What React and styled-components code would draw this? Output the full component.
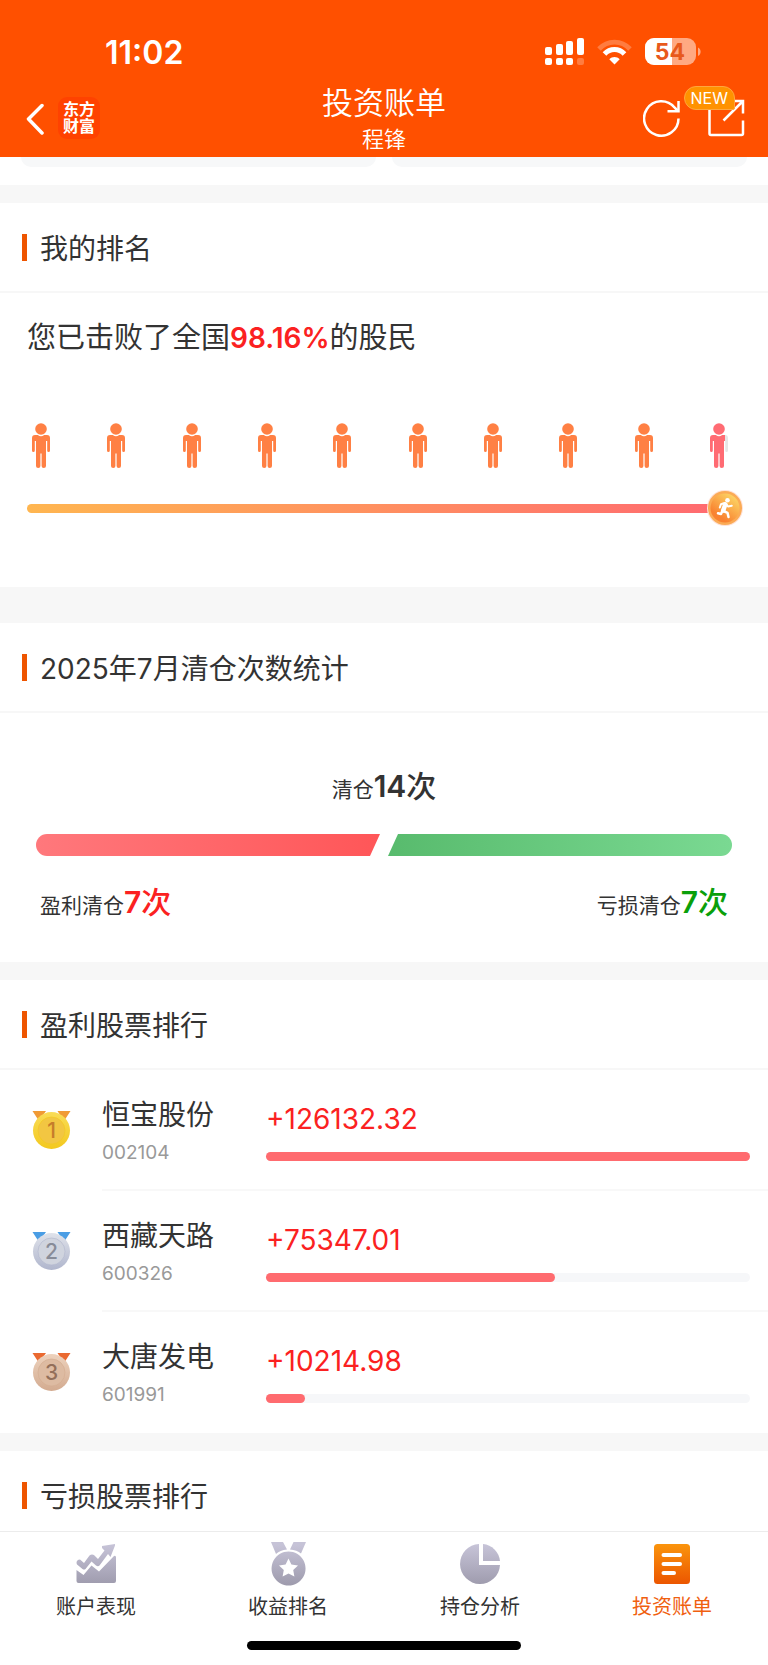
import React from 'react';
import styled, { createGlobalStyle } from 'styled-components';

const GlobalStyle = createGlobalStyle`
  * {
    box-sizing: border-box;
  }
  body {
    margin: 0;
    background: #fff;
    color: #333;
    font-family: Inter, 'Noto Sans CJK SC', sans-serif;
    font-size: 28px;
    font-weight: 400;
  }
  h1, h2, p, ul, ol {
    margin: 0;
    padding: 0;
    font-weight: inherit;
  }
  ul, ol {
    list-style: none;
  }
  button {
    display: flex;
    padding: 0;
    border: 0;
    background: none;
    color: inherit;
    font: inherit;
  }
  svg {
    display: block;
    flex: none;
  }
`;

const Screen = styled.div`
  display: flex;
  flex-direction: column;
  height: 100vh;
  overflow: hidden;
`;

const Header = styled.header`
  flex: none;
  background: #ff5000;
  color: #fff;
`;

const StatusBar = styled.div`
  display: flex;
  align-items: center;
  justify-content: space-between;
  height: 78px;
  padding: 26px 67px 0 105px;
`;

const Clock = styled.time`
  font-size: 32px;
  font-weight: 600;
`;

const StatusIcons = styled.div`
  display: flex;
  align-items: center;
  gap: 13px;
`;

const NavBar = styled.div`
  display: grid;
  grid-template-columns: 1fr auto 1fr;
  align-items: center;
  height: 79px;
  padding: 0 23px;
`;

const NavLeft = styled.div`
  display: flex;
  align-items: center;
  gap: 13px;
`;

const Logo = styled.div`
  width: 42px;
  height: 42px;
  padding: 4px 0;
  border-radius: 9px;
  background: #ff4200;
  font-size: 16px;
  font-weight: 700;
  line-height: 17px;
  text-align: center;
`;

const NavTitle = styled.div`
  display: flex;
  flex-direction: column;
  padding-top: 2px;
  text-align: center;
  font-weight: 350;
  h1 {
    font-size: 31px;
    line-height: 40px;
  }
  p {
    font-size: 22px;
    line-height: 32px;
  }
`;

const NavRight = styled.div`
  display: flex;
  align-items: center;
  justify-content: flex-end;
  gap: 27px;
`;

const ShareButton = styled.button`
  position: relative;
`;

const NewBadge = styled.span`
  position: absolute;
  top: -13px;
  right: 10px;
  padding: 0 6px;
  border: 1px solid #ffa63d;
  border-radius: 12px 12px 2px 12px;
  background: #ff9200;
  font-size: 16px;
  font-weight: 400;
  line-height: 22px;
`;

const Content = styled.main`
  flex: 1;
  min-height: 0;
  overflow: hidden;
  background: #f7f7f7;
`;

const CardStrip = styled.div`
  display: grid;
  grid-template-columns: 1fr 1fr;
  gap: 16px;
  padding: 0 21px 18px;
  background: #fff;
`;

const CardEnd = styled.div`
  height: 10px;
  border-radius: 0 0 14px 14px;
  background: #f7f8f9;
`;

const Section = styled.section`
  margin-top: ${({ $gap }) => $gap || 18}px;
  background: #fff;
`;

const SectionTitle = styled.h2`
  display: flex;
  align-items: center;
  gap: 13px;
  height: 90px;
  padding: 0 22px;
  border-bottom: 2px solid #f7f7f7;
  font-size: 28px;
  &::before {
    content: '';
    width: 5px;
    height: 27px;
    background: #ee5500;
  }
`;

const RankBody = styled.div`
  padding: 25px 25px 61px 27px;
`;

const RankText = styled.p`
  font-size: 29px;
  line-height: 40px;
  strong {
    color: #fb2121;
    font-size: 28px;
    font-weight: 600;
  }
`;

const People = styled.ul`
  display: flex;
  justify-content: space-between;
  padding: 65px 14px 0 4px;
`;

const Track = styled.div`
  display: flex;
  align-items: center;
  margin-top: 21px;
`;

const TrackLine = styled.div`
  flex: 1;
  height: 9px;
  margin-right: -8px;
  border-radius: 5px;
  background: linear-gradient(90deg, #ffb650, #ff6a70);
`;

const Runner = styled.div`
  position: relative;
`;

const CountBody = styled.div`
  padding: 51px 36px 34px;
`;

const Count = styled.p`
  font-size: 21px;
  line-height: 44px;
  text-align: center;
  strong {
    color: ${({ $color }) => $color || '#333'};
    font-size: 30px;
    font-weight: 600;
  }
`;

const Unit = styled.span`
  font-weight: 500;
`;

const CountBar = styled.div`
  display: flex;
  gap: 8px;
  height: 22px;
  margin: 22px 0 24px;
`;

const Profit = styled.div`
  flex: ${({ $share }) => $share};
  border-radius: 11px 0 0 11px;
  background: linear-gradient(90deg, #ff787c, #ff5658);
  clip-path: polygon(0 0, 100% 0, calc(100% - 10px) 100%, 0 100%);
`;

const Loss = styled.div`
  flex: ${({ $share }) => $share};
  border-radius: 0 11px 11px 0;
  background: linear-gradient(90deg, #58bb6d, #7ad992);
  clip-path: polygon(10px 0, 100% 0, 100% 100%, 0 100%);
`;

const CountLegend = styled.div`
  display: flex;
  justify-content: space-between;
  padding: 0 4px;
`;

const StockRow = styled.li`
  display: flex;
  padding-left: 32px;
`;

const MedalCell = styled.div`
  width: 70px;
  padding-top: 40px;
`;

const StockInfo = styled.div`
  display: flex;
  flex: 1;
  height: 121px;
  padding-right: 18px;
  border-bottom: ${({ $last }) => ($last ? 0 : 2)}px solid #f8f8f8;
`;

const StockName = styled.div`
  width: 164px;
  padding-top: 25px;
  font-size: 28px;
  line-height: 40px;
  small {
    display: block;
    color: #999;
    font-size: 19px;
    line-height: 36px;
  }
`;

const StockAmount = styled.div`
  flex: 1;
  padding-top: 29px;
  color: #fb2121;
  font-size: 28px;
  line-height: 40px;
`;

const Meter = styled.div`
  height: 9px;
  margin-top: 13px;
  border-radius: 5px;
  background: #f6f7f9;
`;

const MeterFill = styled.div`
  height: 100%;
  border-radius: 5px;
  background: #ff6b6f;
`;

const TabBar = styled.nav`
  flex: none;
  padding-bottom: 15px;
  border-top: 1px solid #ececec;
  background: #fff;
`;

const Tabs = styled.div`
  display: flex;
`;

const Tab = styled.button`
  && {
    display: flex;
    flex: 1;
    flex-direction: column;
    align-items: center;
    gap: 4px;
    padding-top: 9px;
    color: ${({ $active }) => ($active ? '#f0600f' : '#333')};
    font-size: 20px;
    line-height: 28px;
  }
`;

const HomeIndicator = styled.div`
  width: 274px;
  height: 9px;
  margin: 20px auto 0;
  border-radius: 5px;
  background: #000;
`;

const SignalIcon = () => (
  <svg width="39" height="28" fill="#fff">
    <rect x="0" y="9" width="7" height="8" rx="2" />
    <rect x="11" y="6" width="7" height="11" rx="2" />
    <rect x="21" y="3" width="7" height="14" rx="2" />
    <rect x="32" y="0" width="7" height="17" rx="2" />
    <rect x="0" y="20" width="7" height="7" rx="2" />
    <rect x="11" y="20" width="7" height="7" rx="2" />
    <rect x="21" y="20" width="7" height="7" rx="2" />
    <rect x="32" y="20" width="7" height="7" rx="2" opacity="0.25" />
  </svg>
);

const WifiIcon = () => (
  <svg width="35" height="26" viewBox="0 0 35 26" fill="none" stroke="#fff">
    <path d="M2 10C10.500 .8 24.500 .8 33 10" strokeWidth="4.800" opacity="0.25" />
    <path d="M7.500 15C13 9 22 9 27.500 15" strokeWidth="5" />
    <path d="M17.500 25.500L12.300 20.200C15.200 17.200 19.800 17.200 22.700 20.200Z" fill="#fff" stroke="none" />
  </svg>
);

const BatteryIcon = () => (
  <svg width="56" height="28" viewBox="0 0 56 28">
    <defs>
      <clipPath id="charge">
        <rect width="27" height="28" />
      </clipPath>
    </defs>
    <rect width="51" height="27" rx="9" fill="#ffa982" />
    <rect width="51" height="27" rx="9" fill="#fff" clipPath="url(#charge)" />
    <path d="M53 9.500c3.500 1.500 3.500 7 0 8.500z" fill="#ffa982" />
    <text x="25" y="22" textAnchor="middle" fontSize="23" fontWeight="700" fill="#e8591c">54</text>
  </svg>
);

const BackIcon = () => (
  <svg width="22" height="34" fill="none" stroke="#fff" strokeWidth="3.500" strokeLinecap="round" strokeLinejoin="round">
    <path d="M19 4.500L5.500 18L19 32" />
  </svg>
);

const RefreshIcon = () => (
  <svg width="38" height="40" fill="none" stroke="#fff" strokeWidth="2.500">
    <path d="M35.500 20.500A17.200 17.200 0 1 1 31.500 9.500L35 13" />
    <path d="M35.500 3V13.200H24.500" />
  </svg>
);

const ShareIcon = () => (
  <svg width="37" height="38" fill="none" stroke="#fff" strokeWidth="2.500">
    <path d="M1.500 8V34.500Q1.500 36 3 36H33.500Q35 36 35 34.500V21.500" />
    <path d="M24 2H35V14.500M35 2L15.500 21.500" />
  </svg>
);

const PERSON_PATH = 'M4 12h2.800q3.200 2.400 6.400 0h2.800q3 0 3 3v12.500q0 1.500-1.400 1.500t-1.400-1.500V18H15v25q0 2-2.200 2t-2.200-2V30.500H9.400V43q0 2-2.200 2T5 43V18H3.800v9.500Q3.800 29 2.400 29T1 27.500V15q0-3 3-3z';

const Person = ({ index, fill }) => (
  <svg width="20" height="46">
    <defs>
      <linearGradient id={`person${index}`}>
        <stop offset={fill} stopColor={fill < 1 ? '#ff6b73' : '#ff8044'} />
        <stop offset={fill} stopColor={fill < 1 ? '#e6e6e6' : '#ff8044'} />
      </linearGradient>
    </defs>
    <g fill={`url(#person${index})`}>
      <path d={PERSON_PATH} />
      <circle cx="10" cy="6" r="5.800" fill={fill < 1 ? '#ff6b73' : '#ff8044'} />
    </g>
  </svg>
);

const RunnerIcon = () => (
  <svg width="36" height="36">
    <defs>
      <linearGradient id="runner" x1="0.200" y1="0.900" x2="0.800" y2="0.100">
        <stop offset="0.150" stopColor="#f98230" />
        <stop offset="1" stopColor="#fcd263" />
      </linearGradient>
    </defs>
    <circle cx="18" cy="18" r="18" fill="#ffe1d6" />
    <circle cx="18" cy="18" r="17" fill="#fbab55" />
    <circle cx="18" cy="18" r="14.500" fill="url(#runner)" />
    <circle cx="20.500" cy="10.300" r="2.300" fill="#fff" />
    <g fill="none" stroke="#fff" strokeLinecap="round" strokeLinejoin="round">
      <path d="M18.300 14.500L16.200 20.500" strokeWidth="4.500" />
      <path d="M17.500 13L14 14.200L12.800 17.500M18.500 13L21 16.500L24.800 15.800" strokeWidth="2" />
      <path d="M16.500 21L20.500 22.800L21.500 27M15.500 20.500L14 24L11 23.200" strokeWidth="2.500" />
    </g>
  </svg>
);

const Medal = ({ rank, ribbon, rim, face, ink }) => (
  <svg width="40" height="42">
    <defs>
      <linearGradient id={`rim${rank}`} x2="0" y2="1">
        <stop stopColor={rim[0]} />
        <stop offset="1" stopColor={rim[1]} />
      </linearGradient>
    </defs>
    <path d="M0.500 1H14L7 11zM25.500 1H38.500L32 11z" fill={ribbon} />
    <circle cx="19.500" cy="20.500" r="18.500" fill={`url(#rim${rank})`} />
    <circle cx="19.500" cy="20.500" r="13.500" fill={face} stroke={rim[1]} strokeOpacity="0.600" />
    <text x="19.500" y="28" textAnchor="middle" fontSize="21" fontWeight="500" fill={ink}>{rank}</text>
  </svg>
);

const TabIcon = ({ id, from = '#c6c3d7', to = '#9e9bad', children }) => (
  <svg width="44" height="48">
    <defs>
      <linearGradient id={id} gradientUnits="userSpaceOnUse" x1="0" y1="4" x2="0" y2="44">
        <stop stopColor={from} />
        <stop offset="1" stopColor={to} />
      </linearGradient>
    </defs>
    <g fill={`url(#${id})`}>{children}</g>
  </svg>
);

const PerformanceIcon = () => (
  <TabIcon id="tabPerformance">
    <path d="M2.500 22Q2.500 18.500 6 18.500L10 22L15.500 14.500Q18 12.500 20.500 14.500L24 18L30.500 9.500L28 7V5L41 3V4.500L36.500 16L34 13L25.500 24.500Q24 26 22 24.500L17.500 20.500L11.500 28Q10 29 8.500 28L3 23.500Z" />
    <path d="M2.500 29L9.500 34L17.500 24.500L25 30.500L40 15Q42 14 42 16.500V40Q42 42 40 42H4.500Q2.500 42 2.500 40Z" />
  </TabIcon>
);

const IncomeIcon = () => (
  <TabIcon id="tabIncome">
    <path d="M5 1H17L21 8.500Q14 9 10 13ZM27.500 1H40L35 12.500Q31 9 24 8.500Z" />
    <path fillRule="evenodd" d="M22.500 10.500a17 17 0 1 0 .1 0zM22.500 17.500l2.900 6 6.600.9-4.800 4.600 1.200 6.500-5.900-3.100-5.900 3.100 1.200-6.500-4.800-4.600 6.600-.9z" />
  </TabIcon>
);

const HoldingIcon = () => (
  <TabIcon id="tabHolding">
    <path d="M21 3V24H42A20 20 0 1 1 21 3Z" />
    <path d="M25 3A19 19 0 0 1 42 20H25Z" />
  </TabIcon>
);

const BillIcon = () => (
  <TabIcon id="tabBill" from="#fa930c" to="#eb5400">
    <rect x="4" y="3" width="36" height="40" rx="3.500" />
    <path d="M13.500 14H30M13.500 23H30M13.500 32H24" stroke="#fff" strokeWidth="4" strokeLinecap="round" />
  </TabIcon>
);

const stocks = [
  {
    name: '恒宝股份',
    code: '002104',
    amount: 126132.32,
    medal: { ribbon: '#f09a35', rim: ['#f9dc57', '#f3c81e'], face: '#f2c642', ink: '#c67c2b' }
  },
  {
    name: '西藏天路',
    code: '600326',
    amount: 75347.01,
    medal: { ribbon: '#4a9de4', rim: ['#dfe2ea', '#b0b6cd'], face: '#d0d4de', ink: '#888c98' }
  },
  {
    name: '大唐发电',
    code: '601991',
    amount: 10214.98,
    medal: { ribbon: '#ea6930', rim: ['#edd2bd', '#d3ab90'], face: '#ddbba2', ink: '#936f5a' }
  }
];

const tabs = [
  { label: '账户表现', Icon: PerformanceIcon },
  { label: '收益排名', Icon: IncomeIcon },
  { label: '持仓分析', Icon: HoldingIcon },
  { label: '投资账单', Icon: BillIcon, active: true }
];

const App = () => (
  <Screen lang="zh-CN">
    <GlobalStyle />
    <Header>
      <StatusBar>
        <Clock>11:02</Clock>
        <StatusIcons>
          <SignalIcon />
          <WifiIcon />
          <BatteryIcon />
        </StatusIcons>
      </StatusBar>
      <NavBar>
        <NavLeft>
          <button type="button" aria-label="返回"><BackIcon /></button>
          <Logo>东方<br />财富</Logo>
        </NavLeft>
        <NavTitle>
          <h1>投资账单</h1>
          <p>程锋</p>
        </NavTitle>
        <NavRight>
          <button type="button" aria-label="刷新"><RefreshIcon /></button>
          <ShareButton type="button" aria-label="分享">
            <ShareIcon />
            <NewBadge>NEW</NewBadge>
          </ShareButton>
        </NavRight>
      </NavBar>
    </Header>

    <Content>
      <CardStrip>
        <CardEnd />
        <CardEnd />
      </CardStrip>

      <Section>
        <SectionTitle>我的排名</SectionTitle>
        <RankBody>
          <RankText>您已击败了全国<strong>98.16%</strong>的股民</RankText>
          <People>
            {Array.from({ length: 10 }, (_, i) => (
              <li key={i}><Person index={i} fill={i < 9 ? 1 : 0.82} /></li>
            ))}
          </People>
          <Track>
            <TrackLine />
            <Runner><RunnerIcon /></Runner>
          </Track>
        </RankBody>
      </Section>

      <Section $gap={36}>
        <SectionTitle>2025年7月清仓次数统计</SectionTitle>
        <CountBody>
          <Count>清仓<strong>14<Unit>次</Unit></strong></Count>
          <CountBar>
            <Profit $share={7} />
            <Loss $share={7} />
          </CountBar>
          <CountLegend>
            <Count $color="#fb2121">盈利清仓<strong>7<Unit>次</Unit></strong></Count>
            <Count $color="#0a9f0a">亏损清仓<strong>7<Unit>次</Unit></strong></Count>
          </CountLegend>
        </CountBody>
      </Section>

      <Section>
        <SectionTitle>盈利股票排行</SectionTitle>
        <ol>
          {stocks.map(({ name, code, amount, medal }, i) => (
            <StockRow key={code}>
              <MedalCell><Medal rank={i + 1} {...medal} /></MedalCell>
              <StockInfo $last={i === stocks.length - 1}>
                <StockName>{name}<small>{code}</small></StockName>
                <StockAmount>
                  +{amount.toFixed(2)}
                  <Meter>
                    <MeterFill style={{ width: `${(amount / stocks[0].amount) * 100}%` }} />
                  </Meter>
                </StockAmount>
              </StockInfo>
            </StockRow>
          ))}
        </ol>
      </Section>

      <Section>
        <SectionTitle>亏损股票排行</SectionTitle>
      </Section>
    </Content>

    <TabBar>
      <Tabs>
        {tabs.map(({ label, Icon, active }) => (
          <Tab key={label} type="button" $active={active} aria-current={active ? 'page' : undefined}>
            <Icon />
            {label}
          </Tab>
        ))}
      </Tabs>
      <HomeIndicator />
    </TabBar>
  </Screen>
);

export default App;
